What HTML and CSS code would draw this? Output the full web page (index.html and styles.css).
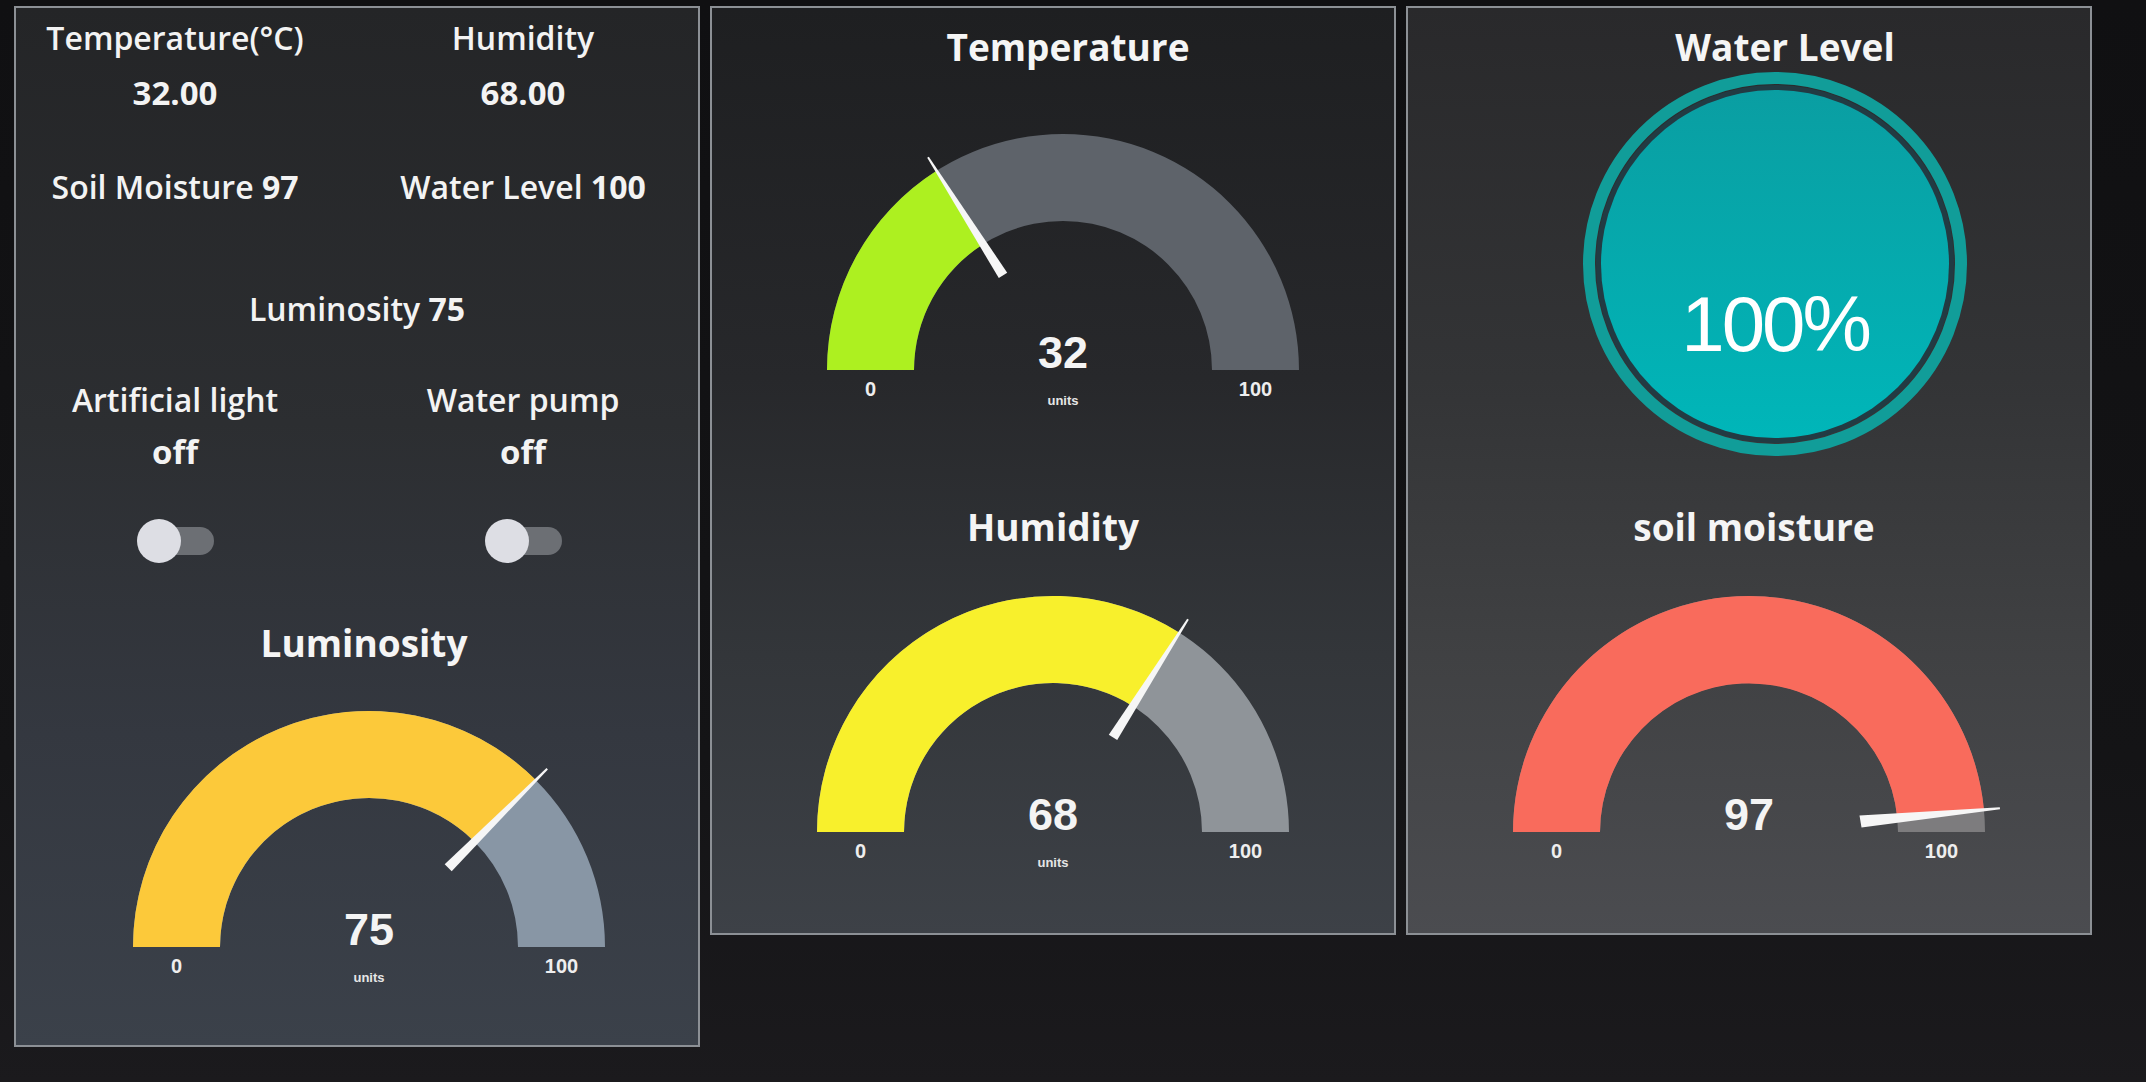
FILE: index.html
```html
<!DOCTYPE html>
<html lang="en">
<head>
<meta charset="utf-8">
<title>Greenhouse Dashboard</title>
<link rel="stylesheet" href="styles.css">
</head>
<body>
<div class="dash">
  <section class="panel p1">
    <div class="stats">
      <div class="cell r1">
        <div class="lbl">Temperature(°C)</div>
        <div class="val">32.00</div>
      </div>
      <div class="cell r1">
        <div class="lbl">Humidity</div>
        <div class="val">68.00</div>
      </div>
      <div class="cell r2"><span class="lbl">Soil Moisture</span> <b>97</b></div>
      <div class="cell r2"><span class="lbl">Water Level</span> <b>100</b></div>
      <div class="cell r3 span2"><span class="lbl">Luminosity</span> <b>75</b></div>
      <div class="cell r4">
        <div class="lbl">Artificial light</div>
        <div class="val off">off</div>
        <div class="switch"><span class="knob"></span></div>
      </div>
      <div class="cell r4">
        <div class="lbl">Water pump</div>
        <div class="val off">off</div>
        <div class="switch"><span class="knob"></span></div>
      </div>
    </div>
    <h2 class="gtitle lum-title">Luminosity</h2>
    <svg class="gauge g-lum" viewBox="0 0 520 280" width="520" height="280">
      <path class="bg" d="M24 240 A236 236 0 0 1 496 240 L409 240 A149 149 0 0 0 111 240 Z"/>
      <path class="fill" d="M24 240 A236 236 0 0 1 426.9 73.1 L365.4 134.6 A149 149 0 0 0 111 240 Z"/>
      <polygon class="needle" points="342.7,164.3 438.9,62.5 437.5,61.1 335.7,157.3"/>
      <text class="gval" x="260" y="238">75</text>
      <text class="glim" x="67.5" y="266">0</text>
      <text class="glim" x="452.5" y="266">100</text>
      <text class="gunit" x="260" y="275">units</text>
    </svg>
  </section>

  <section class="panel p2">
    <h2 class="gtitle first temp-title">Temperature</h2>
    <svg class="gauge g-temp" viewBox="0 0 520 280" width="520" height="280">
      <path class="bg" d="M24 240 A236 236 0 0 1 496 240 L409 240 A149 149 0 0 0 111 240 Z"/>
      <path class="fill" d="M24 240 A236 236 0 0 1 133.6 40.7 L180.2 114.2 A149 149 0 0 0 111 240 Z"/>
      <polygon class="needle" points="204.2,142.7 125.8,26.7 124.2,27.7 195.8,148.1"/>
      <text class="gval" x="260" y="238">32</text>
      <text class="glim" x="67.5" y="266">0</text>
      <text class="glim" x="452.5" y="266">100</text>
      <text class="gunit" x="260" y="275">units</text>
    </svg>
    <h2 class="gtitle second">Humidity</h2>
    <svg class="gauge g-hum low" viewBox="0 0 520 280" width="520" height="280">
      <path class="bg" d="M24 240 A236 236 0 0 1 496 240 L409 240 A149 149 0 0 0 111 240 Z"/>
      <path class="fill" d="M24 240 A236 236 0 0 1 386.4 40.7 L339.8 114.2 A149 149 0 0 0 111 240 Z"/>
      <polygon class="needle" points="324.2,148.1 395.8,27.7 394.2,26.7 315.8,142.7"/>
      <text class="gval" x="260" y="238">68</text>
      <text class="glim" x="67.5" y="266">0</text>
      <text class="glim" x="452.5" y="266">100</text>
      <text class="gunit" x="260" y="275">units</text>
    </svg>
  </section>

  <section class="panel p3">
    <h2 class="gtitle first water-title">Water Level</h2>
    <svg class="liquid" viewBox="0 0 384 384" width="384" height="384">
      <defs>
        <linearGradient id="water" x1="0" y1="0" x2="0" y2="1">
          <stop offset="0" stop-color="#0a9ea2"/>
          <stop offset="1" stop-color="#00b6b9"/>
        </linearGradient>
      </defs>
      <circle class="ring" cx="192" cy="192" r="186"/>
      <circle class="gap" cx="192" cy="192" r="179"/>
      <circle cx="192" cy="192" r="174" fill="url(#water)"/>
      <text class="ltext" x="192" y="279">100%</text>
    </svg>
    <h2 class="gtitle soil-title">soil moisture</h2>
    <svg class="gauge g-soil low" viewBox="0 0 520 280" width="520" height="280">
      <path class="bg" d="M24 240 A236 236 0 0 1 496 240 L409 240 A149 149 0 0 0 111 240 Z"/>
      <path class="fill" d="M24 240 A236 236 0 0 1 494.95 217.8 L408.3 226 A149 149 0 0 0 111 240 Z"/>
      <polygon class="needle" points="372.5,235.5 511,217.3 510.8,215.3 370.5,223.5"/>
      <text class="gval" x="260" y="238">97</text>
      <text class="glim" x="67.5" y="266">0</text>
      <text class="glim" x="452.5" y="266">100</text>
    </svg>
  </section>
</div>
</body>
</html>
```

FILE: styles.css
```css
* { box-sizing: border-box; }

html, body {
  margin: 0;
  padding: 0;
  width: 2146px;
  height: 1082px;
  overflow: hidden;
}

body {
  background: linear-gradient(180deg, #101012 0%, #141416 70%, #1b1a1d 100%);
  color: #f3f3f3;
  font-family: "Open Sans", "Noto Sans", sans-serif;
}

.dash {
  display: flex;
  align-items: flex-start;
  gap: 10px;
  padding: 6px 0 0 14px;
}

.panel {
  width: 686px;
  border: 2px solid #8c9095;
  display: flex;
  flex-direction: column;
  align-items: center;
}

.p1 {
  height: 1041px;
  padding-top: 10px;
  background: linear-gradient(180deg, #242527 0%, #2c2e31 40%, #343840 70%, #3b414a 100%);
}

.p2 {
  height: 929px;
  padding-top: 16px;
  background: linear-gradient(180deg, #1e1f21 0%, #27282b 40%, #33363a 70%, #3d4147 100%);
}

.p3 {
  height: 929px;
  padding-top: 16px;
  background: linear-gradient(180deg, #29292b 0%, #333436 40%, #404143 70%, #4b4c50 100%);
}

/* ---------- stats block ---------- */
.stats {
  width: 100%;
  display: grid;
  grid-template-columns: 1fr 1fr;
  column-gap: 30px;
  padding-right: 16px;
}

.cell {
  display: flex;
  flex-direction: column;
  align-items: center;
  font-size: 32px;
  line-height: 40px;
  font-weight: 600;
  white-space: nowrap;
}

.r2, .r3 {
  display: block;
  text-align: center;
}

.cell b { font-weight: 700; }

.val {
  font-weight: 700;
  font-size: 33px;
  margin-top: 15px;
}

.r2 { margin-top: 54px; }
.r3 { margin-top: 82px; }
.span2 { grid-column: 1 / 3; padding-left: 16px; }
.r4 { margin-top: 51px; }
.r4 .val { margin-top: 12px; }

.switch {
  position: relative;
  margin-top: 47px;
  width: 77px;
  height: 44px;
  display: flex;
  align-items: center;
  justify-content: flex-end;
}

.switch::before {
  content: "";
  width: 62px;
  height: 28px;
  border-radius: 14px;
  background: #6c6f74;
}

.knob {
  position: absolute;
  left: 0;
  top: 0;
  width: 44px;
  height: 44px;
  border-radius: 50%;
  background: #dddee4;
}

/* ---------- gauge titles ---------- */
.gtitle {
  margin: 0;
  font-size: 37px;
  line-height: 46px;
  font-weight: 700;
  color: #f5f5f5;
  white-space: nowrap;
}

.lum-title { margin-top: 57px; margin-left: 14px; }
.temp-title { margin-left: 30px; }
.water-title { margin-left: 72px; }
.second { margin-top: 94px; }
.soil-title { margin-top: 48px; margin-left: 10px; }

/* ---------- gauges ---------- */
.gauge {
  display: block;
  margin-top: 60px;
  overflow: visible;
}

.g-lum { margin-top: 41px; margin-left: 24px; }
.g-temp { margin-left: 20px; }
.gauge.low { margin-top: 42px; }

.g-lum .bg { fill: #8896a5; }
.g-lum .fill { fill: #fcc93a; }

.g-temp .bg { fill: #5e636a; }
.g-temp .fill { fill: #adf020; }

.g-hum .bg { fill: #8f9499; }
.g-hum .fill { fill: #f8f02c; }

.g-soil .bg { fill: #7d7c7e; }
.g-soil .fill { fill: #f96b5c; }

.needle { fill: #f6f6f6; }

.gval {
  font-family: "Liberation Sans", Arial, sans-serif;
  font-weight: 700;
  font-size: 45px;
  fill: #f4f4f4;
  text-anchor: middle;
}

.glim {
  font-family: "Liberation Sans", Arial, sans-serif;
  font-weight: 700;
  font-size: 20px;
  fill: #eeeeee;
  text-anchor: middle;
}

.gunit {
  font-family: "Liberation Sans", Arial, sans-serif;
  font-weight: 700;
  font-size: 13px;
  fill: #e6e6e6;
  text-anchor: middle;
}

/* ---------- liquid fill ---------- */
.liquid {
  display: block;
  margin-top: 2px;
  margin-left: 52px;
}

.ring {
  fill: none;
  stroke: #119d99;
  stroke-width: 12px;
}

.gap { fill: #223b43; }

.ltext {
  font-family: "Liberation Sans", Arial, sans-serif;
  font-size: 78px;
  letter-spacing: -3px;
  fill: #ffffff;
  text-anchor: middle;
}
```
